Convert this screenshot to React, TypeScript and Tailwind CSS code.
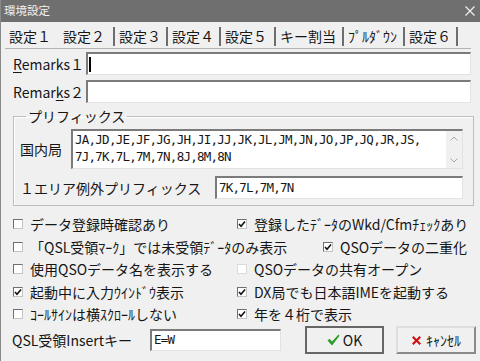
import React from 'react';

const mono = "font-['DejaVu_Sans_Mono',monospace] text-[12.5px] tracking-[-0.75px]";
const field =
  'border-t-2 border-l-2 border-r border-b border-t-[#7b7b7b] border-l-[#7b7b7b] border-r-[#e2e2e2] border-b-[#e2e2e2] bg-white';

const tabs = [
  {label: '設定１', w: 'w-[54px]', sep: false},
  {label: '設定２', w: 'w-[54px]', sep: false},
  {label: '設定３', w: 'w-[53px]', sep: true},
  {label: '設定４', w: 'w-[53px]', sep: true},
  {label: '設定５', w: 'w-[55px]', sep: true},
  {label: 'キー割当', w: 'w-[68px]', sep: true},
  {label: 'ﾌﾟﾙﾀﾞｳﾝ', w: 'w-[61px]', sep: true},
  {label: '設定６', w: 'w-[55px]', sep: true},
];

type Item = {label: string; checked?: boolean; faint?: boolean};

const rows: {left: Item; right: Item; lw: string}[] = [
  {left: {label: 'データ登録時確認あり'}, right: {label: '登録したﾃﾞｰﾀのWkd/Cfmﾁｪｯｸあり', checked: true}, lw: 'w-[224px]'},
  {left: {label: '「QSL受領ﾏｰｸ」では未受領ﾃﾞｰﾀのみ表示'}, right: {label: 'QSOデータの二重化', checked: true}, lw: 'w-[310px]'},
  {left: {label: '使用QSOデータ名を表示する'}, right: {label: 'QSOデータの共有オープン', faint: true}, lw: 'w-[224px]'},
  {left: {label: '起動中に入力ｳｲﾝﾄﾞｳ表示', checked: true}, right: {label: 'DX局でも日本語IMEを起動する', checked: true}, lw: 'w-[224px]'},
  {left: {label: 'ｺｰﾙｻｲﾝは横ｽｸﾛｰﾙしない'}, right: {label: '年を４桁で表示', checked: true}, lw: 'w-[224px]'},
];

function Box({checked, faint}: {checked?: boolean; faint?: boolean}) {
  return (
    <span
      className={`flex h-[10px] w-[10px] shrink-0 items-center justify-center border bg-white ${
        faint
          ? 'border-[#dadada]'
          : 'border-t-[#6f6f6f] border-l-[#6f6f6f] border-r-[#c4c4c4] border-b-[#c4c4c4]'
      }`}
    >
      {checked && (
        <svg width="8" height="8" viewBox="0 0 8 8">
          <path d="M1 4 L3 6.2 L7 1.5" fill="none" stroke="#111" strokeWidth="1.6" />
        </svg>
      )}
    </span>
  );
}

function Option({item}: {item: Item}) {
  return (
    <div className="flex items-center gap-[7px]">
      <Box checked={item.checked} faint={item.faint} />
      <span className="leading-none whitespace-nowrap">{item.label}</span>
    </div>
  );
}

export default function App() {
  return (
    <div className="flex h-[361px] w-[480px] flex-col overflow-hidden border-l border-[#8a8a8a] bg-[#f0f0f0] font-['Noto_Sans_CJK_JP','Noto_Sans',sans-serif] text-[14px] text-[#161616]">
      <div className="flex h-[22px] shrink-0 items-center justify-between bg-[#6f6f6f] pl-[3px] pr-[5px] text-[11.5px] text-[#f2f2f2]">
        <span className="leading-none">環境設定</span>
        <svg width="10" height="10" viewBox="0 0 10 10">
          <path d="M0.5 0.5 L9.5 9.5 M9.5 0.5 L0.5 9.5" stroke="#f0f0f0" strokeWidth="1.2" />
        </svg>
      </div>

      <div className="flex h-[26px] shrink-0 items-center pl-[4px] pt-[2px]">
        {tabs.map((t, i) => (
          <div
            key={t.label}
            className={`flex h-[19px] items-center pl-[4px] leading-none whitespace-nowrap ${t.w} ${
              t.sep ? 'border-l-2 border-[#6d6d6d]' : ''
            } ${i === tabs.length - 1 ? 'border-r-2' : ''}`}
          >
            {t.label}
          </div>
        ))}
      </div>

      <div className="ml-[4px] mr-[9px] h-px shrink-0 bg-[#b4b4b4]" />

      <div className="mt-[3px] flex items-center pl-[12px] pr-[9px]">
        <label className="w-[73px] leading-none">
          <span className="underline underline-offset-2">R</span>emarks１
        </label>
        <div className={`flex h-[23px] flex-1 items-center pl-[1px] ${field}`}>
          <span className="h-[15px] w-[2px] bg-black" />
        </div>
      </div>
      <div className="mt-[5px] flex items-center pl-[12px] pr-[9px]">
        <label className="w-[73px] leading-none">
          Remar<span className="underline underline-offset-2">k</span>s２
        </label>
        <div className={`h-[23px] flex-1 ${field}`} />
      </div>

      <fieldset className="mt-[6px] ml-[12px] mr-[6px] border border-[#bdbdbd] pr-[10px] pb-[6px] pl-[6px] pt-[6px] shadow-[inset_1px_1px_0_#ffffff]">
        <legend className="ml-[6px] px-[2px] leading-none">プリフィックス</legend>
        <div className="flex items-center">
          <span className="w-[51px] leading-none">国内局</span>
          <div className={`flex h-[40px] flex-1 ${field}`}>
            <div className={`flex-1 pl-[2px] pt-[1px] leading-[16.5px] ${mono}`}>
              <div>JA,JD,JE,JF,JG,JH,JI,JJ,JK,JL,JM,JN,JO,JP,JQ,JR,JS,</div>
              <div>7J,7K,7L,7M,7N,8J,8M,8N</div>
            </div>
            <div className="flex w-[16px] flex-col items-center justify-between bg-[#f0f0f0] py-[5px]">
              <svg width="8" height="5" viewBox="0 0 8 5">
                <path d="M0.5 4.5 L4 1 L7.5 4.5" fill="none" stroke="#a6a6a6" strokeWidth="1" />
              </svg>
              <svg width="8" height="5" viewBox="0 0 8 5">
                <path d="M0.5 0.5 L4 4 L7.5 0.5" fill="none" stroke="#a6a6a6" strokeWidth="1" />
              </svg>
            </div>
          </div>
        </div>
        <div className="mt-[7px] flex items-center">
          <span className="w-[195px] leading-none whitespace-nowrap">１エリア例外プリフィックス</span>
          <div className={`flex h-[23px] flex-1 items-center pl-[2px] ${field} ${mono}`}>7K,7L,7M,7N</div>
        </div>
      </fieldset>

      <div className="mt-[7px] flex flex-col">
        {rows.map((r) => (
          <div key={r.left.label} className="flex h-[22.5px] items-center pl-[12px]">
            <div className={r.lw}>
              <Option item={r.left} />
            </div>
            <Option item={r.right} />
          </div>
        ))}
      </div>

      <div className="flex h-[29px] items-center pl-[11px]">
        <span className="w-[138px] leading-none whitespace-nowrap">QSL受領Insertキー</span>
        <div className={`flex h-[22px] w-[131px] items-center pl-[2px] ${field} ${mono}`}>E=W</div>
        <button className="ml-[24px] flex h-[28px] w-[79px] items-center justify-center gap-[3px] border-2 border-[#666666] bg-[#f0f0f0]">
          <svg width="13" height="12" viewBox="0 0 13 12">
            <path d="M0.5 6.5 L2.5 4.8 L5 7.5 L11.5 0.5 L12.5 1.8 L5 11.5 Z" fill="#2f9a2a" />
          </svg>
          <span className="leading-none">OK</span>
        </button>
        <button className="ml-[12px] flex h-[28px] w-[80px] items-center justify-center gap-[4px] border-2 border-t-[#dedede] border-l-[#dedede] border-r-[#8a8a8a] border-b-[#8a8a8a] bg-[#f0f0f0]">
          <svg width="11" height="11" viewBox="0 0 11 11">
            <path d="M1 2.5 L2.5 1 L5.5 4 L8.5 1 L10 2.5 L7 5.5 L10 8.5 L8.5 10 L5.5 7 L2.5 10 L1 8.5 L4 5.5 Z" fill="#d01010" />
          </svg>
          <span className="leading-none">ｷｬﾝｾﾙ</span>
        </button>
      </div>
    </div>
  );
}
